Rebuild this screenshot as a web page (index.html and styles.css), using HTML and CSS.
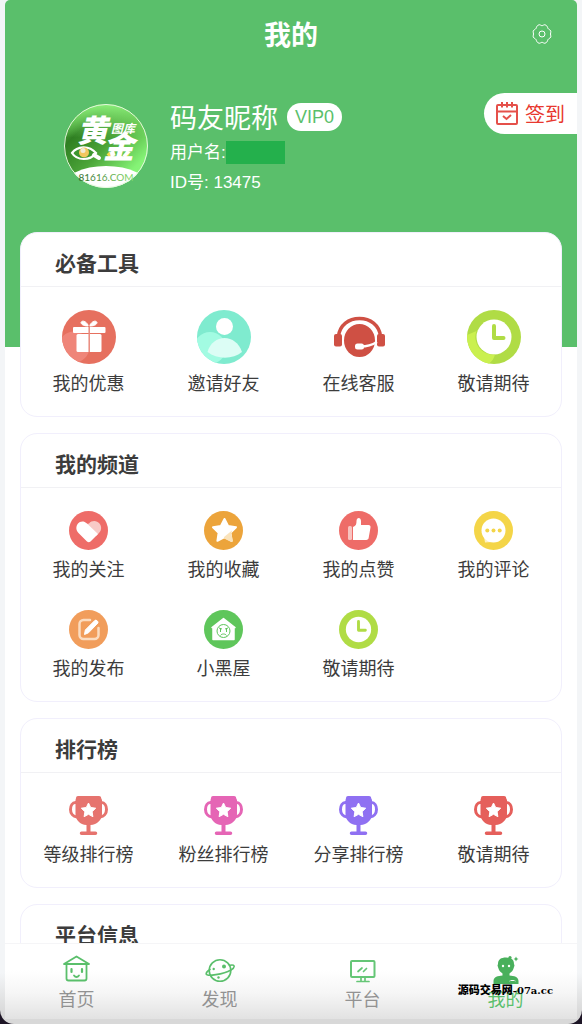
FILE: index.html
```html
<!DOCTYPE html>
<html lang="zh-CN">
<head>
    <meta charset="UTF-8">
    <meta name="viewport" content="width=device-width, initial-scale=1.0">
    <title>我的</title>
    <link rel="stylesheet" href="styles.css">
</head>
<body>
    <!-- Shared icons -->
    <svg class="sprite" aria-hidden="true">
        <symbol id="clock" viewBox="0 0 54 54">
            <circle cx="27" cy="27" r="27" fill="#b0dc45"/>
            <circle cx="27" cy="27" r="17.5" fill="#fff"/>
            <path d="M27 16v12h9.5" fill="none" stroke="#b0dc45" stroke-width="4" stroke-linecap="round" stroke-linejoin="round"/>
        </symbol>
        <symbol id="trophy" viewBox="0 0 39 39">
            <path d="M8 6.5H6.500C3.5 6.5 1.5 9.5 1.5 13.5s2.500 7 6.500 7.500M31 6.500h1.500c3 0 5 3 5 7s-2.500 7-6.500 7.500" fill="none" stroke="currentColor" stroke-width="3"/>
            <path d="M9 0h21c1.500 0 2 .8 2.200 2.200L33 4v14c0 6-5 10.500-11.500 11V35.500H26.500a1.700 1.700 0 0 1 0 3.500h-14a1.700 1.700 0 0 1 0-3.500h5V29C11 28.500 6.500 24 6.500 18V4l.5-1.800C7.200.8 7.700 0 9 0z" fill="currentColor"/>
            <path d="M19.500 7l2.200 4.500 5 .7-3.600 3.500.8 5-4.400-2.400-4.400 2.400.8-5-3.600-3.500 5-.7z" fill="#fff" stroke="#fff" stroke-linejoin="round"/>
        </symbol>
    </svg>

    <div class="app">
        <main class="page">
            <header class="hero">
                <div class="title-bar">
                    <h1>我的</h1>
                    <button type="button" class="settings-btn" aria-label="设置">
                        <svg width="20" height="20" viewBox="0 0 20 20" fill="none" stroke="#fff">
                            <path d="M7 .8c1.200-.4 1.800.9 3 .9s1.800-1.300 3-.9c1.500.5 2.300 1.400 2.700 2.900.3 1.300 1.200 1.500 2.300 2.300 1.600 1.200.5 2.500.5 4s1.100 2.800-.5 4c-1.100.8-2 1-2.300 2.300-.4 1.500-1.200 2.400-2.700 2.900-1.200.4-1.800-.9-3-.9s-1.800 1.300-3 .9c-1.500-.5-2.300-1.400-2.700-2.900C4 15 3.100 14.800 2 14c-1.600-1.200-.5-2.500-.5-4S.4 7.200 2 6c1.100-.8 2-1 2.300-2.300C4.700 2.200 5.500 1.300 7 .8z"/>
                            <circle cx="10" cy="10" r="3"/>
                        </svg>
                    </button>
                </div>
                <div class="profile">
                    <svg class="avatar" viewBox="0 0 84 84" role="img" aria-label="头像">
                        <defs>
                            <linearGradient id="avatarBg" x1="0" y1="0" x2="1" y2="1">
                                <stop offset="0" stop-color="#6fda5c"/>
                                <stop offset=".25" stop-color="#2f7f22"/>
                                <stop offset=".5" stop-color="#4ba438"/>
                                <stop offset=".8" stop-color="#85f376"/>
                                <stop offset="1" stop-color="#8dfb7d"/>
                            </linearGradient>
                            <linearGradient id="avatarTop" x1="0" y1="0" x2="0" y2="1">
                                <stop offset="0" stop-color="#8cf07a"/>
                                <stop offset=".4" stop-color="#8cf07a" stop-opacity="0"/>
                            </linearGradient>
                            <linearGradient id="siteName" x1="0" x2="1">
                                <stop offset="0" stop-color="#2f6b2b"/>
                                <stop offset="1" stop-color="#86dc6c"/>
                            </linearGradient>
                            <clipPath id="avatarClip"><circle cx="42" cy="42" r="42"/></clipPath>
                        </defs>
                        <g clip-path="url(#avatarClip)">
                            <rect width="84" height="84" fill="url(#avatarBg)"/>
                            <rect width="84" height="84" fill="url(#avatarTop)"/>
                            <ellipse cx="42" cy="83" rx="43" ry="21" fill="#fff"/>
                        </g>
                        <circle cx="42" cy="42" r="41.5" fill="none" stroke="#e4f8df"/>
                        <path d="M44 49l4 4M64 49l-4 4" stroke="#f7dc4b" stroke-width="4"/>
                        <text class="logo-big" x="13" y="38">黄</text>
                        <text class="logo-big" x="39" y="54">金</text>
                        <text class="logo-small" x="47" y="29">图库</text>
                        <path d="M8 49c5-7 17-8 24 0-6 8-19 8-24 0z" fill="#3d9630" stroke="#fff" stroke-width="2.2"/>
                        <path d="M30 51l5 3" stroke="#fff" stroke-width="4" stroke-linecap="round"/>
                        <circle cx="20" cy="48.5" r="5" fill="#f3c75e"/>
                        <circle cx="19" cy="46.5" r="2.5" fill="#f2ead3"/>
                        <text class="logo-site" x="42" y="77" text-anchor="middle" fill="url(#siteName)">81616.COM</text>
                    </svg>
                    <div class="user-info">
                        <div class="user-name"><span>码友昵称</span> <span class="vip">VIP0</span></div>
                        <div class="user-row">用户名:<span class="masked"></span></div>
                        <div class="user-row user-id">ID号: 13475</div>
                    </div>
                    <button type="button" class="checkin-btn">
                        <svg width="22" height="23" viewBox="0 0 22 23" fill="none" stroke="#e5504a" stroke-width="2">
                            <rect x="1" y="3" width="20" height="19" rx="1"/>
                            <path d="M1 9.500h20M6 0v5.500M11 0v5.500M16 0v5.500"/>
                            <path d="M7 14l3.500 3 4.500-4"/>
                        </svg>
                        签到
                    </button>
                </div>
            </header>

            <div class="cards">
                <section class="card">
                    <h2>必备工具</h2>
                    <div class="grid large">
                        <a href="#" class="item">
                            <svg viewBox="0 0 54 54">
                                <clipPath id="disc"><circle cx="27" cy="27" r="27"/></clipPath>
                                <circle cx="27" cy="27" r="27" fill="#e6705f"/>
                                <circle cx="12" cy="37" r="15.5" fill="#ef8579" clip-path="url(#disc)"/>
                                <path d="M26 16c-5 0-7-2-7-3.500 1-2.500 5-1.500 7 2.500zm2 0c5 0 7-2 7-3.500-1-2.500-5-1.500-7 2.500z" fill="#fff" stroke="#fff"/>
                                <rect x="11" y="17" width="32.5" height="6" rx="1" fill="#fff"/>
                                <rect x="14.5" y="24" width="25" height="18" rx="1.5" fill="#fff"/>
                                <path d="M27.200 16v26" stroke="#e98a7d" stroke-width="1.5"/>
                            </svg>
                            <span>我的优惠</span>
                        </a>
                        <a href="#" class="item">
                            <svg viewBox="0 0 54 54">
                                <circle cx="27" cy="27" r="27" fill="#7febcf"/>
                                <circle cx="13" cy="38" r="16" fill="#a2fbe2" clip-path="url(#disc)"/>
                                <circle cx="27.5" cy="16.5" r="8.5" fill="#fff"/>
                                <path d="M10.500 42C13 33 20 28 27.500 28S42 33 45 42c-9 7.500-25 7.500-34.500 0z" fill="#dcfdf5"/>
                            </svg>
                            <span>邀请好友</span>
                        </a>
                        <a href="#" class="item">
                            <svg viewBox="0 0 54 54">
                                <path d="M6.500 26C8 15 16.500 8.500 27.500 8.500S47 15 48.500 26" fill="none" stroke="#cf5044" stroke-width="3.5"/>
                                <ellipse cx="27.5" cy="30.5" rx="15.5" ry="16.5" fill="#cf5044"/>
                                <rect x="2" y="24" width="8" height="12.5" rx="2" fill="#cf5044"/>
                                <rect x="45" y="24" width="8" height="12.5" rx="2" fill="#cf5044"/>
                                <path d="M29 36.500c6 0 11-1.500 16-4.500" fill="none" stroke="#fff" stroke-width="2.5"/>
                                <rect x="23" y="33.5" width="9" height="6" rx="2.5" fill="#fff"/>
                            </svg>
                            <span>在线客服</span>
                        </a>
                        <a href="#" class="item">
                            <svg viewBox="0 0 54 54">
                                <use href="#clock"/>
                                <path d="M0 25l9.500-4A17.500 17.500 0 0 0 28 44.500c-1 4-3 7-6 9C9 51 0 40 0 25z" fill="#caf04f"/>
                            </svg>
                            <span>敬请期待</span>
                        </a>
                    </div>
                </section>

                <section class="card">
                    <h2>我的频道</h2>
                    <div class="grid">
                        <a href="#" class="item">
                            <svg viewBox="0 0 39 39">
                                <circle cx="19.5" cy="19.5" r="19.5" fill="#ee6c68"/>
                                <path d="M20 12.500c3-3.500 8-3 10.500 0s2 7-.5 9.500l-3 3-9-12z" fill="#f8cac7"/>
                                <path d="M18 12.500c-3-3-7-2.500-9 0s-2.500 6.500.5 9.500l8.500 8.500c1.200 1 2.300 1 3.500 0l7.500-7.500z" fill="#fff"/>
                            </svg>
                            <span>我的关注</span>
                        </a>
                        <a href="#" class="item">
                            <svg viewBox="0 0 39 39">
                                <circle cx="19.5" cy="19.5" r="19.5" fill="#eca43b"/>
                                <path d="M20.500 8l3.600 7 7.900 1.200-5.600 5.600 1.300 8-7.200-3.600-7.100 3.600 1.200-8L9 16.200 16.900 15z" fill="#fff" stroke="#fff" stroke-width="2" stroke-linejoin="round"/>
                                <path d="M20 26l8-6.500-.6 2.500 1.300 8.500c-1 .8-2 .3-8.700-3z" fill="#fae3bb"/>
                            </svg>
                            <span>我的收藏</span>
                        </a>
                        <a href="#" class="item">
                            <svg viewBox="0 0 39 39">
                                <circle cx="19.5" cy="19.5" r="19.5" fill="#ee6c68"/>
                                <rect x="9" y="15" width="4" height="14" rx="1.5" fill="#f8c3c0"/>
                                <path d="M14 16c3-1 3.500-3 3.500-6 0-4 4.500-4 4.500 0v4h7.500c1.500 0 2.300 1 2 2.500l-1.800 10.300c-.2 1.300-1 2.200-2.500 2.200H14z" fill="#fff"/>
                            </svg>
                            <span>我的点赞</span>
                        </a>
                        <a href="#" class="item">
                            <svg viewBox="0 0 39 39">
                                <circle cx="19.5" cy="19.5" r="19.5" fill="#f4d548"/>
                                <path d="M10 26l1 5.500 7-.5z" fill="#fdf3c4"/>
                                <circle cx="19.5" cy="19.5" r="12" fill="#fff"/>
                                <g fill="#f4d548"><circle cx="13.3" cy="19.5" r="2"/><circle cx="19.5" cy="19.5" r="2"/><circle cx="25.7" cy="19.5" r="2"/></g>
                            </svg>
                            <span>我的评论</span>
                        </a>
                        <a href="#" class="item">
                            <svg viewBox="0 0 39 39">
                                <circle cx="19.5" cy="19.5" r="19.5" fill="#f19d5b"/>
                                <path d="M21 10h-6.500a4 4 0 0 0-4 4v11a4 4 0 0 0 4 4h11a4 4 0 0 0 4-4v-7" fill="none" stroke="#fbdcc0" stroke-width="2.5" stroke-linecap="round"/>
                                <path d="M15.500 24.500l.8-4.500L26 10.300c1-.9 3.800 1.400 2.900 2.700L19.500 22.800z" fill="#fff" stroke="#fff" stroke-linejoin="round"/>
                            </svg>
                            <span>我的发布</span>
                        </a>
                        <a href="#" class="item">
                            <svg viewBox="0 0 39 39">
                                <circle cx="19.5" cy="19.5" r="19.5" fill="#5fc65b"/>
                                <path d="M19.500 8.500L31 17.500h-1v12H9v-12H8z" fill="#fff" stroke="#fff" stroke-width="1.5" stroke-linejoin="round"/>
                                <g fill="none" stroke="#5fc65b">
                                    <circle cx="19.5" cy="21" r="6.5"/>
                                    <path d="M15 18l3 1M24 18l-3 1M16.500 19v3M22.500 19v3M16.500 25.500c1-2 5-2 6 0"/>
                                </g>
                            </svg>
                            <span>小黑屋</span>
                        </a>
                        <a href="#" class="item">
                            <svg viewBox="0 0 54 54"><use href="#clock"/></svg>
                            <span>敬请期待</span>
                        </a>
                    </div>
                </section>

                <section class="card">
                    <h2>排行榜</h2>
                    <div class="grid">
                        <a href="#" class="item level">
                            <svg viewBox="0 0 39 39"><use href="#trophy"/></svg>
                            <span>等级排行榜</span>
                        </a>
                        <a href="#" class="item fans">
                            <svg viewBox="0 0 39 39"><use href="#trophy"/></svg>
                            <span>粉丝排行榜</span>
                        </a>
                        <a href="#" class="item share">
                            <svg viewBox="0 0 39 39"><use href="#trophy"/></svg>
                            <span>分享排行榜</span>
                        </a>
                        <a href="#" class="item soon">
                            <svg viewBox="0 0 39 39"><use href="#trophy"/></svg>
                            <span>敬请期待</span>
                        </a>
                    </div>
                </section>

                <section class="card">
                    <h2>平台信息</h2>
                </section>
            </div>
        </main>

        <nav class="tab-bar">
            <a href="#" class="tab">
                <svg width="27" height="29" viewBox="0 0 27 29" fill="none" stroke="#5abf6b" stroke-width="1.8" stroke-linecap="round" stroke-linejoin="round">
                    <path d="M1 9l12.500-7.500L26 9zM3.500 9v14.500a2 2 0 0 0 2 2h16a2 2 0 0 0 2-2V9"/>
                    <path d="M8.500 14v3M19 14v3" stroke-width="2.2"/>
                    <path d="M11 20.500c1.500 2 3.500 2 5 0"/>
                </svg>
                <span>首页</span>
            </a>
            <a href="#" class="tab">
                <svg width="30" height="29" viewBox="0 0 30 29" fill="none" stroke="#5abf6b" stroke-width="1.6" stroke-linecap="round" stroke-linejoin="round">
                    <circle cx="15" cy="15.5" r="10.8"/>
                    <path d="M5 14.500c-2.500 1.500-4 3-3.800 4.500.5 2.500 17 .5 24.800-4 2.500-1.500 3.500-3 3-4.200-.4-.9-1.800-1-4-.6"/>
                    <g fill="#5abf6b" stroke="none"><circle cx="19" cy="11.5" r="2"/><circle cx="8.7" cy="14" r="1.2"/><circle cx="13.5" cy="22.5" r="1.2"/></g>
                </svg>
                <span>发现</span>
            </a>
            <a href="#" class="tab">
                <svg width="27" height="29" viewBox="0 0 27 29" fill="none" stroke="#65c676" stroke-width="2" stroke-linecap="round" stroke-linejoin="round">
                    <rect x="2" y="6" width="23.5" height="16" rx="1"/>
                    <path d="M8 26.500h12M12 22.500v3M16 22.500v3" stroke-width="1.7"/>
                    <path d="M9 16.500l4-3.500M14.500 16.500l3-3" stroke-width="1.7"/>
                </svg>
                <span>平台</span>
            </a>
            <a href="#" class="tab active">
                <svg width="27" height="29" viewBox="0 0 27 29" fill="#49b05c">
                    <path d="M6 9c0-4.500 3-6.500 8-6.500S22 4.500 22 9l.5 1.500-.8 2.500c-.7 2.500-2 4-4.200 5.500v2c4.500.3 9 1.500 9 5.500v3h-25v-3c0-4 4.500-5.200 9-5.500v-2C8.300 17 7 15.500 6.300 13l-.8-2.500z"/>
                    <circle cx="18" cy="2.5" r="1.6"/>
                    <path d="M24 1.500l.8 1.700 1.700.8-1.700.8-.8 1.700-.8-1.700-1.700-.8 1.700-.8z"/>
                    <g fill="#fff"><circle cx="11" cy="11" r="1.2"/><circle cx="17" cy="11" r="1.2"/><path d="M17 26.500c1.500-2 5.500-2 7 0-2-.6-5-.6-7 0z"/></g>
                </svg>
                <span>我的</span>
            </a>
        </nav>
        <div class="watermark">源码交易网<span>-07a.cc</span></div>
    </div>
</body>
</html>
```
FILE: styles.css
```css
* {
    box-sizing: border-box;
}
body {
    margin: 0;
    background: #1d1526;
    color: #3c3c3c;
    font-family: "Liberation Sans", "Noto Sans CJK SC", sans-serif;
}
h1, h2 {
    margin: 0;
}
a {
    color: inherit;
    text-decoration: none;
}
button {
    border: none;
    padding: 0;
    font-family: inherit;
    cursor: pointer;
}
svg {
    display: block;
}
.sprite {
    position: absolute;
    width: 0;
    height: 0;
}
.app {
    position: relative;
    display: flex;
    flex-direction: column;
    height: 100vh;
    padding: 0 5px 5px;
    background: linear-gradient(#f3f5f7 95%, #d8d8d8 99%);
    border-radius: 0 0 14px 14px;
}
.page {
    flex: 1;
    min-height: 0;
    overflow-y: auto;
    scrollbar-width: none;
    background: #fff;
    border-radius: 5px 5px 0 0;
}

/* Header */
.hero {
    padding-bottom: 153px;
    background: #5abf6b;
    color: #fff;
}
.title-bar {
    display: grid;
    grid-template-columns: 1fr auto 1fr;
    align-items: center;
    height: 68px;
    padding: 0 25px;
}
.title-bar h1 {
    grid-column: 2;
    padding-top: 3px;
    font-size: 27px;
    line-height: 40px;
}
.settings-btn {
    justify-self: end;
    background: none;
}
.profile {
    display: flex;
    align-items: flex-start;
    padding: 25px 0 0 59px;
}
.avatar {
    width: 84px;
    height: 84px;
    margin-top: 11px;
}
.logo-big {
    font-size: 31px;
    font-weight: 900;
    font-style: italic;
    fill: #fff;
}
.logo-small {
    font-size: 12px;
    font-weight: 700;
    font-style: italic;
    fill: #fff;
}
.logo-site {
    font-size: 10px;
    font-family: Lato, sans-serif;
}
.user-info {
    flex: 1;
    padding: 10px 0 0 22px;
}
.user-name {
    display: flex;
    align-items: center;
    gap: 9px;
    height: 28px;
    font-size: 27px;
    line-height: 28px;
    white-space: nowrap;
}
.user-name span:first-child {
    padding-top: 3px;
}
.vip {
    padding: 0 8px;
    border-radius: 14px;
    background: #fff;
    color: #5abf6b;
    font-size: 18px;
}
.user-row {
    display: flex;
    margin-top: 10px;
    font-size: 17px;
    line-height: 23px;
}
.user-id {
    margin-top: 7px;
}
.masked {
    width: 59px;
    background: #24b04c;
}
.checkin-btn {
    display: flex;
    align-items: center;
    gap: 7px;
    height: 41px;
    padding: 0 12px;
    border-radius: 21px 0 0 21px;
    background: #fff;
    color: #e8382f;
    font-size: 20px;
}

/* Cards */
.cards {
    display: flex;
    flex-direction: column;
    gap: 16px;
    margin-top: -115px;
    padding: 0 15px 16px;
}
.card {
    border: 1px solid #f1effc;
    border-radius: 17px;
    background: #fff;
}
.card h2 {
    padding: 15px 34px 6px;
    border-bottom: 1px solid #f1f1f4;
    font-size: 21px;
    line-height: 32px;
}
.grid {
    display: grid;
    grid-template-columns: repeat(4, 1fr);
    row-gap: 27px;
    padding: 23px 0 19px;
}
.item {
    display: flex;
    flex-direction: column;
    align-items: center;
    gap: 7px;
    font-size: 18px;
    line-height: 26px;
}
.item svg {
    width: 39px;
    height: 39px;
}
.large svg {
    width: 54px;
    height: 54px;
}
.level svg {
    color: #e6736e;
}
.fans svg {
    color: #e565b5;
}
.share svg {
    color: #8f70f2;
}
.soon svg {
    color: #e55f5b;
}

/* Bottom navigation */
.tab-bar {
    display: grid;
    grid-template-columns: repeat(4, 1fr);
    height: 76px;
    padding-top: 11px;
    border-top: 1px solid #f5f5f7;
    background: linear-gradient(#fff 35%, #f6f6f6 65%, #e2e2e2);
}
.tab {
    display: flex;
    flex-direction: column;
    align-items: center;
    gap: 3px;
    color: #929292;
    font-size: 18px;
    line-height: 26px;
}
.tab.active {
    color: #5abf6b;
}
.watermark {
    position: absolute;
    right: 29px;
    bottom: 25px;
    color: #000;
    font-family: "Noto Sans CJK SC", sans-serif;
    font-size: 11px;
    font-weight: 900;
    line-height: 16px;
}
.watermark span {
    font-family: "DejaVu Serif", serif;
    font-size: 10px;
}
```
